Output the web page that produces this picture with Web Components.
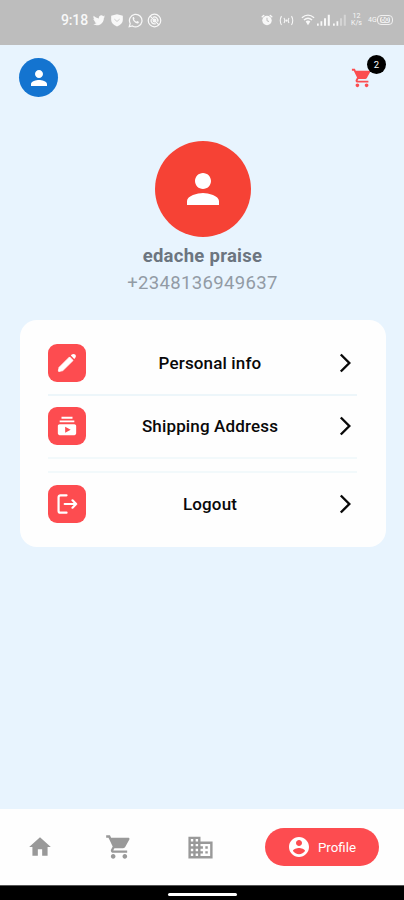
<!DOCTYPE html>
<html lang="en"><head><meta charset="utf-8"><title>Profile</title>
<style>html,body{margin:0;height:100%;overflow:hidden;background:#e8f4fe;font-family:Roboto,sans-serif}</style></head>
<body>
<profile-screen></profile-screen>
<script>
const ICONS={
person:'<path d="M12 12c2.21 0 4-1.79 4-4s-1.79-4-4-4-4 1.79-4 4 1.79 4 4 4zm0 2c-2.67 0-8 1.34-8 4v2h16v-2c0-2.66-5.33-4-8-4z"/>',
cart:'<path d="M7 18c-1.1 0-1.99.9-1.99 2S5.9 22 7 22s2-.9 2-2-.9-2-2-2zM1 2v2h2l3.6 7.59-1.35 2.45c-.16.28-.25.61-.25.96 0 1.1.9 2 2 2h12v-2H7.42c-.14 0-.25-.11-.25-.25l.03-.12.9-1.63h7.45c.75 0 1.41-.41 1.75-1.03l3.58-6.49c.08-.14.12-.31.12-.48 0-.55-.45-1-1-1H5.21l-.94-2H1zm16 16c-1.1 0-1.99.9-1.99 2s.89 2 1.99 2 2-.9 2-2-.9-2-2-2z"/>',
home:'<path d="M10 20v-6h4v6h5v-8h3L12 3 2 12h3v8z"/>',
business:'<path d="M12 7V3H2v18h20V7H12zM6 19H4v-2h2v2zm0-4H4v-2h2v2zm0-4H4V9h2v2zm0-4H4V5h2v2zm4 12H8v-2h2v2zm0-4H8v-2h2v2zm0-4H8V9h2v2zm0-4H8V5h2v2zm10 12h-8v-2h2v-2h-2v-2h2v-2h-2V9h8v10zm-2-8h-2v2h2v-2zm0 4h-2v2h2v-2z"/>',
account:'<path d="M12 2C6.48 2 2 6.48 2 12s4.48 10 10 10 10-4.48 10-10S17.52 2 12 2zm0 3c1.66 0 3 1.34 3 3s-1.34 3-3 3-3-1.34-3-3 1.34-3 3-3zm0 14.2c-2.5 0-4.71-1.28-6-3.22.03-1.99 4-3.08 6-3.08 1.99 0 5.97 1.09 6 3.08-1.29 1.94-3.5 3.22-6 3.22z"/>',
address:'<path d="M20 8H4V6h16v2zm-2-6H6v2h12V2zm4 10v8c0 1.1-.9 2-2 2H4c-1.1 0-2-.9-2-2v-8c0-1.1.9-2 2-2h16c1.1 0 2 .9 2 2zm-6 4l-6-3.27v6.53L16 16z"/>',
edit:'<path stroke="currentColor" stroke-width="1" stroke-linejoin="round" d="M14.800 5.400l3.800 3.800L7.400 20.300 3.200 21.200Q2.500 21.200 2.600 20.500L3.500 16.700z"/><path d="M16.200 3.800l1-1c1.100-1 2.700-.9 3.700 0s1.100 2.600 0 3.700l-1 1z"/>',
logout:'<path fill="none" stroke="currentColor" stroke-width="2.400" stroke-linecap="round" stroke-linejoin="round" d="M11.500 2.500H5Q2.800 2.500 2.800 4.500V19.500Q2.800 21.500 5 21.500H11.500M9.500 12H22M18 8l4 4-4 4"/>',
chevron:'<path fill="none" stroke="currentColor" stroke-width="2.400" d="M7.800 3.500L16.300 12 7.800 20.500"/>',
bird:'<path d="M22.460 6c-.77.35-1.600.58-2.460.69.88-.53 1.560-1.370 1.880-2.380-.83.5-1.750.85-2.720 1.050C18.370 4.500 17.260 4 16 4c-2.350 0-4.270 1.920-4.270 4.290 0 .34.04.67.11.98C8.280 9.090 5.110 7.380 3 4.790c-.37.63-.58 1.370-.58 2.150 0 1.490.75 2.810 1.910 3.560-.71 0-1.370-.2-1.950-.5v.03c0 2.080 1.480 3.820 3.440 4.210a4.220 4.220 0 0 1-1.930.07 4.280 4.280 0 0 0 4 2.980 8.521 8.521 0 0 1-5.330 1.840c-.34 0-.68-.02-1.020-.06C3.440 20.290 5.700 21 8.120 21 16 21 20.330 14.460 20.330 8.790c0-.19 0-.37-.01-.56.84-.6 1.560-1.360 2.140-2.230z"/>',
shield:'<path d="M12 2l10 2.500v7c0 5.500-4 9.500-10 11.500C6 21 2 17 2 11.500v-7z"/><path fill="none" stroke="#bdbdbd" stroke-width="1.300" d="M7.500 10.500l4.500 4 4.500-4"/>',
phone:'<path fill="none" stroke="currentColor" stroke-width="2" d="M2 22l1.500-5.200A10 10 0 1 1 7.200 20.700z"/><path d="M7.500 7.200c.8-1 1.800-.9 2.200 0l.8 1.800-.9 1.400c.8 1.500 2 2.700 3.700 3.500l1.400-1.200 2.400 1.200c.5.300.3 2-.8 2.600C13.500 18.200 6.500 12.500 7.500 7.200z"/>',
blocked:'<g fill="none" stroke="currentColor" stroke-width="2"><circle cx="12" cy="12" r="10"/><path d="M5 5l14 14M7 9.500a5.500 5.500 0 0 0 7 7.500M9.500 7a5.500 5.500 0 0 1 7.500 7"/><circle cx="12" cy="12" r="2.200"/></g>',
alarm:'<circle cx="12" cy="13" r="9.500"/><path stroke="currentColor" stroke-width="3" stroke-linecap="round" d="M2.500 5.500l3-2.500M21.500 5.500l-3-2.500"/><path fill="none" stroke="#bdbdbd" stroke-width="2" d="M12 7.500v6l4 1.500"/>',
cast:'<g fill="none" stroke="currentColor" stroke-width="1.700"><path d="M4 5Q0 12 4 19M20 5q4 7 0 14M8 8q2.500 4 0 8M16 8q-2.500 4 0 8"/></g><circle cx="12" cy="12" r="1.800"/>',
wifi:'<g fill="none" stroke="currentColor" stroke-width="2.200"><path d="M1.500 8Q12-1 22.500 8M5 12Q12 6 19 12"/></g><path d="M8 14.500q4-3 8 0L12 21z"/>',
signal:'<path d="M0 18h3v4H0zM6 14h3v8H6zM12 9h3.500v13H12zM18.500 3H22v19h-3.500z"/>',
signal2:'<path d="M0 18h3v4H0zM6 14h3v8H6z"/><path opacity=".4" d="M12 9h3.500v13H12zM18.500 3H22v19h-3.500z"/>'
};
function define(name,html,after){
  customElements.define(name,class extends HTMLElement{
    connectedCallback(){
      if(this.shadowRoot)return;
      const t=document.createElement('template');t.innerHTML=html;
      this.attachShadow({mode:'open'}).append(t.content.cloneNode(true));
      if(after)after(this,this.shadowRoot);
    }
  });
}
define('app-icon','<style>:host{display:block;flex:none}svg{display:block;width:100%;height:100%}</style><svg viewBox="0 0 24 24" fill="currentColor"></svg>',(el,r)=>{
  const s=el.getAttribute('size');el.style.width=el.style.height=s+'px';
  r.querySelector('svg').innerHTML=ICONS[el.getAttribute('name')];
});
define('status-bar',`<style>
:host{display:flex;height:45px;flex:none;box-sizing:border-box;background:#bdbdbd;color:#f8f8f8;padding:0 11px 5px 61px;align-items:center;justify-content:space-between}
div{display:flex;align-items:center}.time{font-size:14px;font-weight:500;width:27px;white-space:nowrap;letter-spacing:-.15px}
.left{gap:4px}
.speed{flex-direction:column;font-size:7px;line-height:7.500px;width:13px;margin:0 5px 0 3px}
.bolt{font-size:7px;width:9px;white-space:nowrap}
.battery{border:1px solid #f0f0f0;border-radius:4px;width:14px;height:8px;justify-content:center}
.battery span{background:#eee;color:#aaa;font-size:7px;line-height:6px;border-radius:2px;padding:0 1px}
</style><div class="left"><span class="time">9:18</span><app-icon name="bird" size="14"></app-icon><app-icon name="shield" size="14"></app-icon><app-icon name="phone" size="15"></app-icon><app-icon name="blocked" size="15"></app-icon></div>
<div><app-icon name="alarm" size="12" style="margin-right:6px"></app-icon><app-icon name="cast" size="15" style="margin-right:7px"></app-icon><app-icon name="wifi" size="14" style="margin-right:2px"></app-icon><app-icon name="signal" size="14" style="margin-right:2px"></app-icon><app-icon name="signal2" size="14"></app-icon><div class="speed"><span>12</span><span>K/s</span></div><span class="bolt">4G</span><div class="battery"><span>60</span></div></div>`);
define('top-bar',`<style>
:host{display:flex;justify-content:space-between;padding:13px 18px 0 19px;height:83px;box-sizing:border-box}
.me{width:39px;height:39px;border-radius:50%;background:#1474d0;color:#fff;display:grid;place-items:center}
.cart{position:relative;width:35px;height:31px;padding-top:9px;box-sizing:border-box;color:#fb4d50}
.badge{position:absolute;top:-3px;right:0;width:19px;height:19px;border-radius:50%;background:#000;color:#fff;font-size:9.500px;line-height:19px;text-align:center}
</style><div class="me"><app-icon name="person" size="24"></app-icon></div><div class="cart"><app-icon name="cart" size="22"></app-icon><span class="badge">2</span></div>`);
define('user-summary',`<style>
:host{display:flex;flex-direction:column;align-items:center;padding:13px 0 0 1px}
.avatar{width:96px;height:96px;border-radius:50%;background:#f64235;color:#fff;display:grid;place-items:center}
.name{font-size:18.500px;font-weight:700;line-height:24px;color:#6c757f;margin-top:7px;letter-spacing:.28px}
.phone{font-size:18.500px;line-height:24px;color:#929ba5;margin-top:3px;letter-spacing:.34px}
</style><div class="avatar"><app-icon name="person" size="48"></app-icon></div><div class="name"><slot name="name"></slot></div><div class="phone"><slot name="phone"></slot></div>`);
define('menu-card',`<style>:host{display:block;background:#fefefe;border-radius:17px;height:227px;margin:25px 18px 0 20px;padding:24px 29px 0 28px;box-sizing:border-box}</style><slot></slot>`);
define('menu-row',`<style>
:host{display:grid;grid-template-columns:38px 1fr 24px;align-items:center;height:38px;color:#090909;font-size:17px;font-weight:500;letter-spacing:.15px}
.tile{width:38px;height:38px;border-radius:9px;background:#fd4c50;color:#fff;display:grid;place-items:center}
.label{text-align:center;padding-left:1px}
</style><div class="tile"></div><div class="label"><slot></slot></div><app-icon name="chevron" size="24"></app-icon>`,(el,r)=>{
  r.querySelector('.tile').innerHTML='<app-icon name="'+el.getAttribute('icon')+'" size="22"></app-icon>';
});
define('menu-divider','<style>:host{display:block;height:2px;background:#edf6fa}</style>');
define('bottom-nav',`<style>
:host{display:flex;margin-top:auto;height:76px;flex:none;background:#fefefe;color:#999;align-items:center;padding:0 25px 0 27px;justify-content:space-between;box-sizing:border-box}
.pill{display:flex;align-items:center;width:114px;height:38px;border-radius:19px;background:#fd4c50;color:#fff;padding-left:22px;gap:7px;box-sizing:border-box;font-size:13.300px}
</style><app-icon name="home" size="26"></app-icon><app-icon name="cart" size="28" style="margin-left:1px"></app-icon><app-icon name="business" size="29" style="margin:0 -1px 0 1px"></app-icon><div class="pill"><app-icon name="account" size="24"></app-icon><span>Profile</span></div>`);
define('gesture-bar',`<style>:host{display:flex;height:15px;flex:none;background:#000;justify-content:center;align-items:center;padding-top:2px;box-sizing:border-box;border-top:1px solid #555}i{width:69px;height:3px;border-radius:2px;background:#fff}</style><i></i>`);
define('profile-screen',`<style>:host{display:flex;flex-direction:column;height:900px;width:404px}</style>
<status-bar></status-bar><top-bar></top-bar>
<user-summary><span slot="name">edache praise</span><span slot="phone">+2348136949637</span></user-summary>
<menu-card><menu-row icon="edit">Personal info</menu-row><menu-divider style="margin:12px 0 11px"></menu-divider>
<menu-row icon="address">Shipping Address</menu-row><menu-divider style="margin:12px 0;opacity:.7"></menu-divider><menu-divider style="margin-bottom:12px;opacity:.7"></menu-divider>
<menu-row icon="logout">Logout</menu-row></menu-card>
<bottom-nav></bottom-nav><gesture-bar></gesture-bar>`);
</script></body></html>
